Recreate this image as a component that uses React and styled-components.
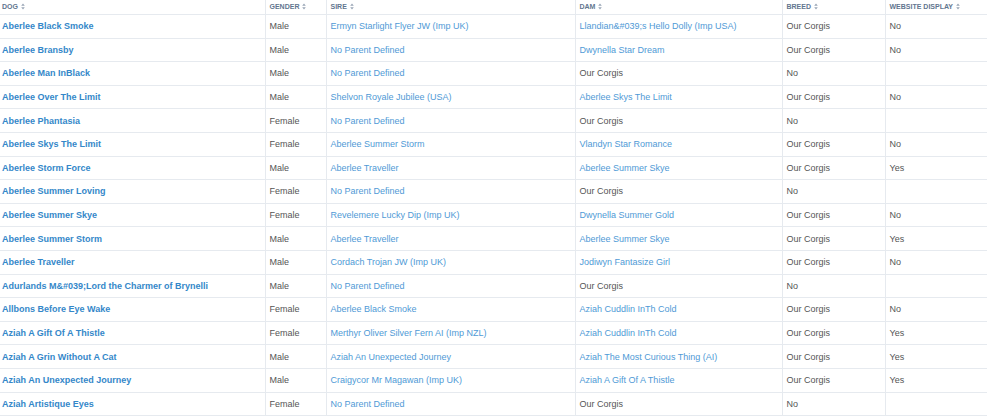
import React from "react";
import styled, { createGlobalStyle } from "styled-components";

const GlobalStyle = createGlobalStyle`
  body {
    margin: 0;
    background: #fff;
    font-family: "Liberation Sans", Arial, sans-serif;
  }
`;

const COLUMNS = [
  { key: "dog", label: "DOG", width: 265 },
  { key: "gender", label: "GENDER", width: 61 },
  { key: "sire", label: "SIRE", width: 249 },
  { key: "dam", label: "DAM", width: 207 },
  { key: "breed", label: "BREED", width: 103 },
  { key: "display", label: "WEBSITE DISPLAY", width: 102 },
];

const DOGS = [
  ["Aberlee Black Smoke", "Male", "Ermyn Starlight Flyer JW (Imp UK)", "Llandian&#039;s Hello Dolly (Imp USA)", "Our Corgis", "No"],
  ["Aberlee Bransby", "Male", "No Parent Defined", "Dwynella Star Dream", "Our Corgis", "No"],
  ["Aberlee Man InBlack", "Male", "No Parent Defined", null, "Our Corgis", "No"],
  ["Aberlee Over The Limit", "Male", "Shelvon Royale Jubilee (USA)", "Aberlee Skys The Limit", "Our Corgis", "No"],
  ["Aberlee Phantasia", "Female", "No Parent Defined", null, "Our Corgis", "No"],
  ["Aberlee Skys The Limit", "Female", "Aberlee Summer Storm", "Vlandyn Star Romance", "Our Corgis", "No"],
  ["Aberlee Storm Force", "Male", "Aberlee Traveller", "Aberlee Summer Skye", "Our Corgis", "Yes"],
  ["Aberlee Summer Loving", "Female", "No Parent Defined", null, "Our Corgis", "No"],
  ["Aberlee Summer Skye", "Female", "Revelemere Lucky Dip (Imp UK)", "Dwynella Summer Gold", "Our Corgis", "No"],
  ["Aberlee Summer Storm", "Male", "Aberlee Traveller", "Aberlee Summer Skye", "Our Corgis", "Yes"],
  ["Aberlee Traveller", "Male", "Cordach Trojan JW (Imp UK)", "Jodiwyn Fantasize Girl", "Our Corgis", "No"],
  ["Adurlands M&#039;Lord the Charmer of Brynelli", "Male", "No Parent Defined", null, "Our Corgis", "No"],
  ["Allbons Before Eye Wake", "Female", "Aberlee Black Smoke", "Aziah Cuddlin InTh Cold", "Our Corgis", "No"],
  ["Aziah A Gift Of A Thistle", "Female", "Merthyr Oliver Silver Fern AI (Imp NZL)", "Aziah Cuddlin InTh Cold", "Our Corgis", "Yes"],
  ["Aziah A Grin Without A Cat", "Male", "Aziah An Unexpected Journey", "Aziah The Most Curious Thing (AI)", "Our Corgis", "Yes"],
  ["Aziah An Unexpected Journey", "Male", "Craigycor Mr Magawan (Imp UK)", "Aziah A Gift Of A Thistle", "Our Corgis", "Yes"],
  ["Aziah Artistique Eyes", "Female", "No Parent Defined", null, "Our Corgis", "No"],
];

const Table = styled.table`
  width: 987px;
  table-layout: fixed;
  border-collapse: collapse;
  font-size: 9px;
  color: #555;
`;

const HeadCell = styled.th`
  height: 13px;
  padding: 0 4px 1px;
  text-align: left;
  font-size: 7px;
  font-weight: bold;
  color: #62768f;
  white-space: nowrap;
  vertical-align: middle;
  border-bottom: 1px solid #e6eaef;
  border-left: ${(p) => (p.first ? "none" : "1px solid #e6eaef")};
  padding-left: ${(p) => (p.first ? "2px" : "4px")};
`;

const Cell = styled.td`
  height: 22.6px;
  padding: 0 4px;
  white-space: nowrap;
  overflow: hidden;
  border-bottom: 1px solid #e6eaef;
  border-left: ${(p) => (p.first ? "none" : "1px solid #e6eaef")};
  padding-left: ${(p) => (p.first ? "2px" : "4px")};
`;

const DogLink = styled.a`
  color: #3487c9;
  font-weight: bold;
  text-decoration: none;
`;

const ParentLink = styled.a`
  color: #4f9ad6;
  text-decoration: none;
`;

const SortIcon = styled.svg`
  margin-left: 3px;
  vertical-align: -1px;
`;

const Sort = () => (
  <SortIcon width="4" height="7" viewBox="0 0 4 7">
    <path d="M2 0.5 L3.8 2.8 H0.2 Z M2 6.5 L3.8 4.2 H0.2 Z" fill="#9aa7b6" />
  </SortIcon>
);

const App = () => {
  return (
    <>
      <GlobalStyle />
      <Table>
        <colgroup>
          {COLUMNS.map((c) => (
            <col key={c.key} style={{ width: c.width }} />
          ))}
        </colgroup>
        <thead>
          <tr>
            {COLUMNS.map((c, i) => (
              <HeadCell key={c.key} first={i === 0}>
                {c.label}
                <Sort />
              </HeadCell>
            ))}
          </tr>
        </thead>
        <tbody>
          {DOGS.map(([dog, gender, sire, dam, breed, display]) => {
            const shifted = dam === null;
            return (
              <tr key={dog}>
                <Cell first>
                  <DogLink href="#">{dog}</DogLink>
                </Cell>
                <Cell>{gender}</Cell>
                <Cell>
                  <ParentLink href="#">{sire}</ParentLink>
                </Cell>
                {shifted ? (
                  <>
                    <Cell>{breed}</Cell>
                    <Cell>{display}</Cell>
                    <Cell />
                  </>
                ) : (
                  <>
                    <Cell>
                      <ParentLink href="#">{dam}</ParentLink>
                    </Cell>
                    <Cell>{breed}</Cell>
                    <Cell>{display}</Cell>
                  </>
                )}
              </tr>
            );
          })}
        </tbody>
      </Table>
    </>
  );
};

export default App;
